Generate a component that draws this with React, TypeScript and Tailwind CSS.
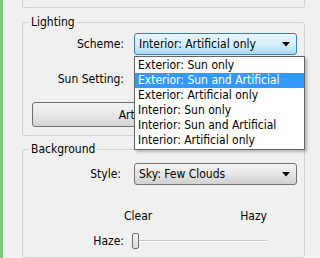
import { FC } from 'react';

const schemeOptions = [
    'Exterior: Sun only',
    'Exterior: Sun and Artificial',
    'Exterior: Artificial only',
    'Interior: Sun only',
    'Interior: Sun and Artificial',
    'Interior: Artificial only',
];

const Arrow: FC = () => (
    <svg width="8" height="5" viewBox="0 0 8 5" className="shrink-0">
        <path d="M0 0H8L4 4.5Z" fill="#000" />
    </svg>
);

const ComboBox: FC<{ value: string; focused?: boolean }> = ({ value, focused }) => (
    <div
        className={
            focused
                ? 'flex h-[22px] w-[163px] items-center justify-between rounded-[3px] border border-[#3c7fb1] bg-gradient-to-b from-[#eaf6fd] via-[#d9f0fc] to-[#a9daf5] pl-[4px] pr-[6px]'
                : 'flex h-[22px] w-[163px] items-center justify-between rounded-[3px] border border-[#707070] bg-gradient-to-b from-[#f4f4f4] via-[#e6e6e6] to-[#d0d0d0] pl-[4px] pr-[6px]'
        }
    >
        <span className="truncate">{value}</span>
        <Arrow />
    </div>
);

export default function App() {
    return (
        <div className="flex h-[258px] w-[320px] overflow-hidden bg-[#f0f0f0] font-['DejaVu_Sans_Condensed','Liberation_Sans',sans-serif] text-[12px] leading-[14px] text-black">
            <div className="w-[3px] shrink-0 bg-[#7fc57f]" />
            <div className="flex flex-1 flex-col pl-[19px] pr-[15px]">
                <div className="h-[8px] shrink-0 rounded-b-[3px] border border-t-0 border-[#d3d3d3]" />

                <fieldset className="mt-[7px] rounded-[3px] border border-[#d3d3d3] pb-[8px] pt-[4px]">
                    <legend className="ml-[6px] px-[2px]">Lighting</legend>
                    <div className="grid grid-cols-[101px_163px] items-center gap-x-[10px] gap-y-[13px]">
                        <span className="text-right">Scheme:</span>
                        <div className="relative">
                            <ComboBox value="Interior: Artificial only" focused />
                            {/* open drop-down list */}
                            <div className="absolute left-0 top-full z-10 mt-[1px] w-[171px] border border-[#646464] bg-white py-[1px] shadow-[2px_2px_3px_rgba(0,0,0,0.25)]">
                                {schemeOptions.map((option, i) => (
                                    <div
                                        key={option}
                                        className={
                                            i === 1
                                                ? 'h-[15px] bg-[#3399ff] pl-[3px] leading-[15px] text-white'
                                                : 'h-[15px] pl-[3px] leading-[15px]'
                                        }
                                    >
                                        {option}
                                    </div>
                                ))}
                            </div>
                        </div>
                        <span className="text-right">Sun Setting:</span>
                        <ComboBox value="" />
                    </div>
                    <button className="ml-[9px] mt-[12px] flex h-[25px] w-[264px] items-center justify-center rounded-[3px] border border-[#707070] bg-gradient-to-b from-[#f2f2f2] via-[#e8e8e8] to-[#d3d3d3]">
                        Artificial Lights...
                    </button>
                </fieldset>

                <fieldset className="mt-[6px] flex-1 rounded-[3px] border border-[#d3d3d3] pt-[7px]">
                    <legend className="ml-[6px] px-[2px]">Background</legend>
                    <div className="grid grid-cols-[98px_163px] items-center gap-x-[13px]">
                        <span className="text-right">Style:</span>
                        <ComboBox value="Sky: Few Clouds" />
                    </div>
                    <div className="ml-[101px] mt-[24px] flex w-[143px] justify-between">
                        <span>Clear</span>
                        <span>Hazy</span>
                    </div>
                    <div className="mt-[8px] flex h-[20px] items-center">
                        <span className="w-[101px] text-right">Haze:</span>
                        <div className="relative ml-[8px] flex h-[16px] w-[135px] items-center">
                            <div className="h-[2px] w-full border-b border-t border-b-white border-t-[#c5c5c5]" />
                            <div className="absolute left-0 top-0 h-[16px] w-[7px] rounded-[2px] border border-[#707070] bg-gradient-to-b from-[#f6f6f6] to-[#dcdcdc]" />
                        </div>
                    </div>
                </fieldset>
            </div>
        </div>
    );
}
